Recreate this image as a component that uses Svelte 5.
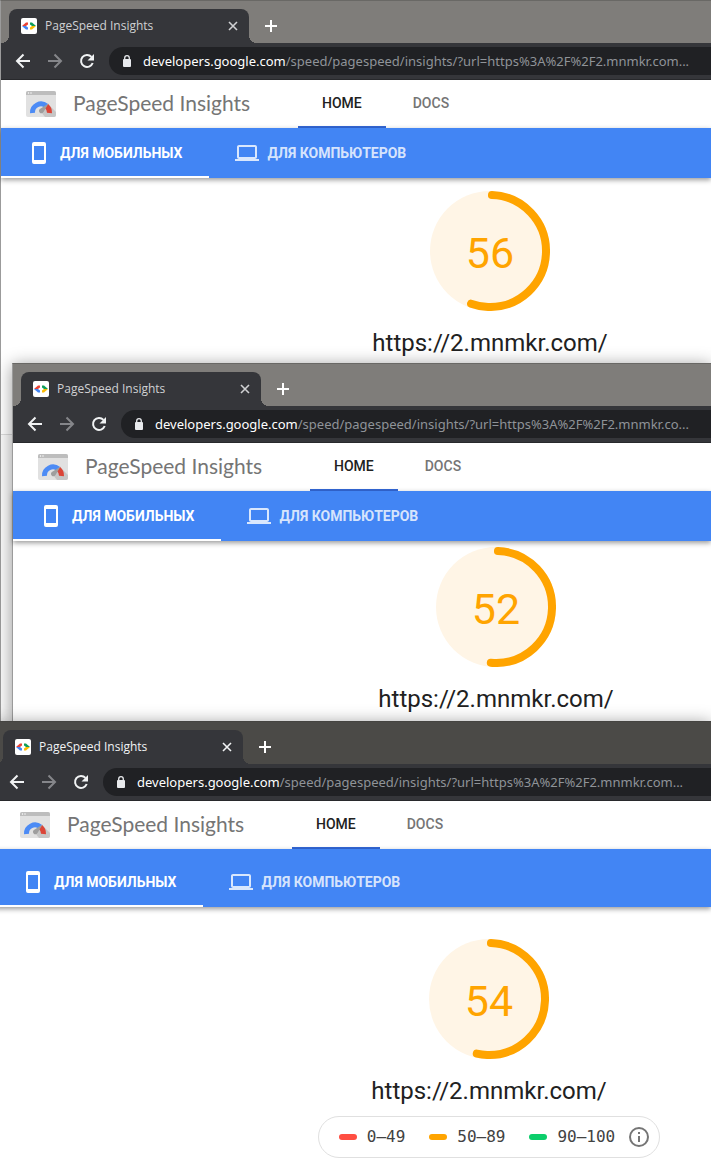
<script lang="ts">
  interface BrowserWindow {
    id: string;
    score: number;
    path: string;
    legend?: boolean;
  }

  const windows: BrowserWindow[] = [
    { id: 'back', score: 56, path: '/speed/pagespeed/insights/?url=https%3A%2F%2F2.mnmkr.com...' },
    { id: 'middle', score: 52, path: '/speed/pagespeed/insights/?url=https%3A%2F%2F2.mnmkr.co...' },
    { id: 'front', score: 54, path: '/speed/pagespeed/insights/?url=https%3A%2F%2F2.mnmkr.com...', legend: true },
  ];

  const ranges = [
    { label: '0–49', level: 'fail' },
    { label: '50–89', level: 'average' },
    { label: '90–100', level: 'pass' },
  ];

  const RADIUS = 56;
  const CIRCUMFERENCE = 2 * Math.PI * RADIUS;

  // The round cap takes half a stroke at the end of the arc
  function arc(score: number) {
    return `${(score / 100) * CIRCUMFERENCE - 4} ${CIRCUMFERENCE}`;
  }
</script>

<div class="desktop">
  {#each windows as win (win.id)}
    <section class="window {win.id}">
      <div class="titlebar">
        <div class="tab">
          <svg class="favicon" width="16" height="16" viewBox="0 0 16 16">
            <rect width="16" height="16" rx="2" fill="#fff" />
            <path d="M1 8 5 4.500 7 4.500 7 6.500 5 8z" fill="#ea4335" />
            <path d="M1 8 5 8 7 9.500 7 11.500 5 11.500z" fill="#4285f4" />
            <path d="M15 8 11 4.500 9 4.500 9 6.500 11 8z" fill="#0f9d58" />
            <path d="M15 8 11 8 9 9.500 9 11.500 11 11.500z" fill="#fbbc04" />
          </svg>
          <span class="tab-title">PageSpeed Insights</span>
          <button class="icon-button" aria-label="Close tab">
            <svg width="16" height="16" viewBox="0 0 16 16">
              <path d="M4 4l8 8M12 4l-8 8" stroke="currentColor" stroke-width="1.600" />
            </svg>
          </button>
        </div>
        <button class="icon-button new-tab" aria-label="New tab">
          <svg width="16" height="16" viewBox="0 0 16 16">
            <path d="M8 2v12M2 8h12" stroke="currentColor" stroke-width="2" />
          </svg>
        </button>
      </div>

      <div class="toolbar">
        <button class="icon-button" aria-label="Back">
          <svg width="16" height="16" viewBox="0 0 16 16">
            <path d="M15 8H2.500M8.500 1.500 2 8l6.500 6.500" fill="none" stroke="currentColor" stroke-width="2" />
          </svg>
        </button>
        <button class="icon-button muted" aria-label="Forward">
          <svg width="16" height="16" viewBox="0 0 16 16">
            <path d="M1 8h12.500M7.500 1.500 14 8l-6.500 6.500" fill="none" stroke="currentColor" stroke-width="2" />
          </svg>
        </button>
        <button class="icon-button" aria-label="Reload">
          <svg width="16" height="16" viewBox="0 0 16 16">
            <path d="M13.700 10A6 6 0 1 1 12.500 3.900" fill="none" stroke="currentColor" stroke-width="2" />
            <path d="M15 1v6.500H8.500z" fill="currentColor" />
          </svg>
        </button>
        <div class="address">
          <svg width="10" height="12" viewBox="0 0 10 12">
            <rect x="1" y="4" width="8" height="8" rx="1" fill="currentColor" />
            <path d="M2.700 5V3a2.300 2.300 0 0 1 4.600 0v2" fill="none" stroke="currentColor" stroke-width="1.300" />
          </svg>
          <span class="url"><span class="host">developers.google.com</span>{win.path}</span>
        </div>
      </div>

      <header class="site-header">
        <svg class="logo" width="30" height="26" viewBox="0 0 30 26">
          <rect width="30" height="26" rx="2" fill="#e1e1e1" />
          <path d="M0 4V2a2 2 0 0 1 2-2h26a2 2 0 0 1 2 2v2z" fill="#bdbdbd" />
          <circle cx="2.500" cy="2" r="0.700" fill="#fff" />
          <circle cx="5" cy="2" r="0.700" fill="#fff" />
          <path d="M22 13l8 8v3a2 2 0 0 1-2 2h-9l-4-5z" fill="#c6c6c6" />
          <path d="M6.500 22a8.500 8.500 0 0 1 14-7" fill="none" stroke="#4c8bf5" stroke-width="5" />
          <path d="M20.500 15a8.500 8.500 0 0 1 3 7" fill="none" stroke="#db4437" stroke-width="5" />
          <path d="M22.500 12.500l-5 8.500a2.400 2.400 0 1 1-3.600-3z" fill="#9e9e9e" />
        </svg>
        <h1>PageSpeed Insights</h1>
        <nav>
          <a class="current" href="#home">HOME</a>
          <a href="#docs">DOCS</a>
        </nav>
      </header>

      <div class="devices">
        <button class="device selected">
          <svg width="24" height="24" viewBox="0 0 24 24">
            <path
              d="M17 1H7a2 2 0 0 0-2 2v18a2 2 0 0 0 2 2h10a2 2 0 0 0 2-2V3a2 2 0 0 0-2-2zm0 18H7V5h10z"
              fill="currentColor"
            />
          </svg>
          ДЛЯ МОБИЛЬНЫХ
        </button>
        <button class="device">
          <svg width="24" height="24" viewBox="0 0 24 24">
            <path
              d="M20 18c1.100 0 2-.900 2-2V6c0-1.100-.900-2-2-2H4c-1.100 0-2 .900-2 2v10c0 1.100.900 2 2 2H0v2h24v-2zM4 6h16v10H4z"
              fill="currentColor"
            />
          </svg>
          ДЛЯ КОМПЬЮТЕРОВ
        </button>
      </div>

      <main class="report">
        <div class="gauge">
          <svg viewBox="0 0 120 120">
            <circle cx="60" cy="60" r="60" fill="#fff5e6" />
            <circle
              cx="60"
              cy="60"
              r={RADIUS}
              fill="none"
              stroke="#ffa400"
              stroke-width="8"
              stroke-linecap="round"
              stroke-dasharray={arc(win.score)}
              transform="rotate(-88 60 60)"
            />
          </svg>
          <span class="score">{win.score}</span>
        </div>
        <h2>https://2.mnmkr.com/</h2>
        {#if win.legend}
          <div class="legend">
            {#each ranges as range}
              <span class="range {range.level}">{range.label}</span>
            {/each}
            <button class="icon-button info" aria-label="Info">
              <svg width="20" height="20" viewBox="0 0 20 20">
                <circle cx="10" cy="10" r="9" fill="none" stroke="currentColor" stroke-width="2" />
                <path d="M9 5h2v2H9zM9 9h2v6H9z" fill="currentColor" />
              </svg>
            </button>
          </div>
        {/if}
      </main>
      <div class="details"></div>
    </section>
  {/each}
</div>

<style>
  :global(body) {
    background: #fff;
  }

  .desktop {
    display: grid;
    grid-template-columns: minmax(0, 1fr);
    grid-template-rows: 363px 358px auto;
    overflow: hidden;
    font-family: Roboto, sans-serif;
  }
  .window {
    --frame: #7f7d7a;
    --frame-edge: #696865;
    --tab-text: #d0d1d3;
    display: flex;
    flex-direction: column;
    grid-column: 1;
    min-width: 0;
    background: #fff;
    border-top: 1px solid var(--frame-edge);
    border-left: 1px solid #9b9b9b;
    box-shadow: 0 2px 16px rgba(0, 0, 0, 0.4);
  }
  .back {
    grid-row: 1 / 3;
  }
  .middle {
    grid-row: 2;
    margin-left: 12px;
  }
  .front {
    --frame: #4b4a47;
    --frame-edge: #454441;
    --tab-text: #f1f3f4;
    grid-row: 3;
    margin-left: -6px;
  }

  button {
    padding: 0;
    border: 0;
    background: none;
    font: inherit;
    color: inherit;
  }
  svg {
    display: block;
    flex: none;
  }
  .icon-button {
    flex: none;
  }

  .titlebar {
    display: flex;
    padding: 8px 8px 0;
    background: var(--frame);
  }
  .tab {
    position: relative;
    display: flex;
    align-items: center;
    gap: 8px;
    box-sizing: border-box;
    width: 240px;
    height: 34px;
    padding: 0 8px 0 12px;
    border-radius: 8px 8px 0 0;
    background: #35363a;
    color: var(--tab-text);
    font: 12px/16px 'Open Sans', 'Noto Sans', sans-serif;
  }
  .tab::before,
  .tab::after {
    content: '';
    position: absolute;
    bottom: 0;
    width: 8px;
    height: 8px;
  }
  .tab::before {
    right: 100%;
    background: radial-gradient(circle at 0 0, transparent 8px, #35363a 8px);
  }
  .tab::after {
    left: 100%;
    background: radial-gradient(circle at 100% 0, transparent 8px, #35363a 8px);
  }
  .tab-title {
    flex: 1;
    white-space: nowrap;
  }
  .new-tab {
    margin-left: 14px;
    color: #fff;
  }

  .toolbar {
    display: flex;
    flex: none;
    align-items: center;
    gap: 16px;
    height: 36px;
    padding-left: 14px;
    border-bottom: 1px solid #28292c;
    background: #35363a;
    color: #f1f3f4;
  }
  .muted {
    color: #85868a;
  }
  .address {
    display: flex;
    flex: 1;
    align-items: center;
    gap: 11px;
    min-width: 0;
    height: 28px;
    margin-left: -2px;
    padding-left: 13px;
    border-radius: 14px 0 0 14px;
    background: #202124;
    color: #e8eaed;
    font: 13px/20px 'Noto Sans', 'Open Sans', sans-serif;
  }
  .url {
    overflow: hidden;
    color: #8f9398;
    white-space: nowrap;
  }
  .host {
    color: #fff;
  }

  .site-header {
    display: flex;
    flex: none;
    align-items: center;
    height: 48px;
    padding-left: 25px;
  }
  h1 {
    width: 225px;
    margin: 0 0 2px 17px;
    color: #757575;
    font: 400 21px/28px Lato, sans-serif;
    white-space: nowrap;
  }
  nav {
    display: flex;
    align-self: stretch;
    gap: 3px;
  }
  nav a {
    padding: 0 24px;
    border-bottom: 2px solid transparent;
    color: #757575;
    font-size: 14px;
    font-weight: 500;
    line-height: 46px;
    text-decoration: none;
  }
  nav .current {
    border-color: #3367d6;
    color: #212121;
  }

  .devices {
    position: relative;
    display: flex;
    flex: none;
    background: #4285f4;
    box-shadow: 0 2px 5px rgba(0, 0, 0, 0.4);
  }
  .front .devices {
    padding-top: 8px;
  }
  .device {
    display: flex;
    align-items: center;
    gap: 9px;
    height: 50px;
    padding: 2px 26px 0;
    border-bottom: 2px solid transparent;
    color: rgba(255, 255, 255, 0.8);
    font-size: 14px;
    font-weight: 700;
    white-space: nowrap;
  }
  .selected {
    border-color: #fff;
    color: #fff;
  }

  .report {
    display: flex;
    flex-direction: column;
    align-items: center;
    padding: 13px 0 75px 268px;
  }
  .middle .report {
    padding-top: 6px;
    padding-bottom: 0;
  }
  .front .report {
    padding: 32px 0 8px 272px;
  }
  .gauge {
    display: grid;
    width: 120px;
    height: 120px;
  }
  .gauge > * {
    grid-area: 1 / 1;
  }
  .score {
    place-self: center;
    padding-top: 3px;
    color: #ffa400;
    font-size: 43px;
    line-height: 48px;
  }
  h2 {
    margin: 16px 0 0;
    color: #212121;
    font-size: 24px;
    font-weight: 400;
    line-height: 32px;
  }

  .legend {
    display: flex;
    align-items: center;
    box-sizing: border-box;
    height: 42px;
    margin-top: 9px;
    padding: 0 10px 0 20px;
    border: 1px solid #e0e0e0;
    border-radius: 21px;
    color: #424242;
    font: 16px/24px 'DejaVu Sans Mono', monospace;
    white-space: nowrap;
  }
  .range {
    display: flex;
    align-items: center;
    gap: 10px;
  }
  .range + .range {
    margin-left: 24px;
  }
  .range::before {
    content: '';
    width: 18px;
    height: 6px;
    border-radius: 3px;
  }
  .fail::before {
    background: #ff4e42;
  }
  .average::before {
    background: #ffa400;
  }
  .pass::before {
    background: #0cce6b;
  }
  .info {
    margin-left: 14px;
    color: #757575;
  }

  .back .details {
    flex: 1;
    border-top: 1px solid #dcdcdc;
    background: #fafafa;
  }
</style>
